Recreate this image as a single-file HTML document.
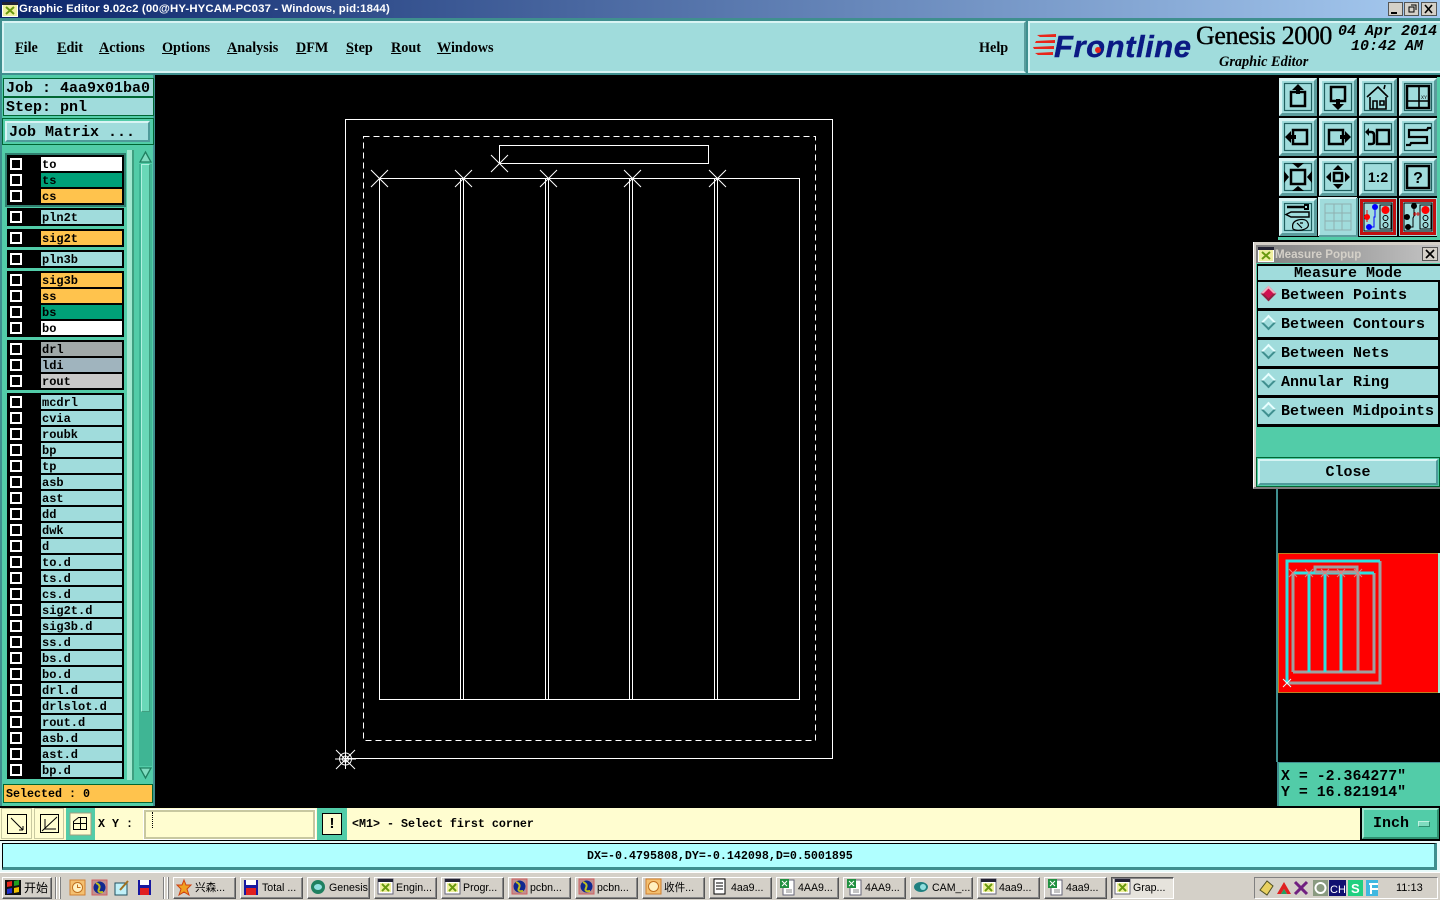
<!DOCTYPE html>
<html><head><meta charset="utf-8"><title>Graphic Editor</title>
<style>
html,body{margin:0;padding:0;width:1440px;height:900px;overflow:hidden;background:#000}
div,span,svg{position:absolute;box-sizing:border-box}
u{position:static;text-decoration:underline}
b,i{position:static}
.m{font:bold 11.67px/14px "Liberation Mono",monospace;color:#000;white-space:pre}
.big{font:bold 15px/16px "Liberation Mono",monospace;color:#000;white-space:pre}
.menu{font:bold 14.2px/16px "Liberation Serif",serif;top:40px;color:#000;white-space:pre}
.g{background:#000;left:7px;width:117px}
.c{left:10px;width:12px;height:12px;border:2px solid #fff;background:#000}
.l{left:41px;width:81px;height:14px;background:#a0dcdc;font:bold 12px/16px "Liberation Mono",monospace;color:#000;padding-left:1px;white-space:pre;overflow:hidden}
.o{background:#ffc34d}.w{background:#fff}.t{background:#00a078}
.b{left:1258px;width:180px;height:26px;background:#a0dcdc;font:bold 15px/28px "Liberation Mono",monospace;padding-left:23px;color:#000;white-space:pre}
.d{left:1263px;width:11px;height:11px;transform:rotate(45deg);background:#a0dcdc;border:2px solid;border-color:#e8ffff #3f8f8f #3f8f8f #e8ffff}
.tb{top:877px;height:22px;width:63px;background:#d4d0c8;border:1px solid;border-color:#fff #555 #555 #fff;box-shadow:inset -1px -1px 0 #888;font:10.6px/21px "Liberation Sans","Noto Sans CJK SC",sans-serif;color:#000;padding-left:20px;white-space:pre;overflow:hidden}
</style></head><body>

<!-- title bar -->
<div style="left:0;top:0;width:1440px;height:18px;background:linear-gradient(90deg,#0a246a,#a6caf0)"></div>
<svg style="left:2px;top:2px" width="16" height="15"><rect width="16" height="15" fill="#fff"/><rect x="0" y="0" width="16" height="3" fill="#223"/><rect x="1" y="3" width="14" height="11" fill="#f0f0a0"/><path d="M4 5l8 7M12 5l-8 7" stroke="#6a9a10" stroke-width="2"/></svg>
<div style="left:19px;top:2px;font:bold 11.4px/14px 'Liberation Sans',sans-serif;color:#fff;white-space:pre;letter-spacing:.12px">Graphic Editor 9.02c2 (00@HY-HYCAM-PC037 - Windows, pid:1844)</div>
<svg style="left:1388px;top:2px" width="50" height="14">
<g fill="#d4d0c8" stroke="#555"><rect x=".5" y=".5" width="14" height="13"/><rect x="16.5" y=".5" width="14" height="13"/><rect x="33.5" y=".5" width="15" height="13"/></g>
<path d="M3 10h6v2H3z" fill="#000"/><path d="M21 5h5v5h-5zM23 3h5v5" fill="none" stroke="#000"/><path d="M37 3l7 8M44 3l-7 8" stroke="#000" stroke-width="1.6"/></svg>

<!-- top menu -->
<div style="left:0;top:18px;width:1440px;height:57px;background:#3f8f8f"></div>
<div style="left:2px;top:21px;width:1024px;height:52px;background:#a0dcdc;border:2px solid;border-color:#d8f4f4 #5a9c9c #d8f4f4 #d8f4f4"></div>
<div class="menu" style="left:15px"><u>F</u>ile</div>
<div class="menu" style="left:57px"><u>E</u>dit</div>
<div class="menu" style="left:99px"><u>A</u>ctions</div>
<div class="menu" style="left:162px"><u>O</u>ptions</div>
<div class="menu" style="left:227px"><u>A</u>nalysis</div>
<div class="menu" style="left:296px"><u>D</u>FM</div>
<div class="menu" style="left:346px"><u>S</u>tep</div>
<div class="menu" style="left:391px"><u>R</u>out</div>
<div class="menu" style="left:437px"><u>W</u>indows</div>
<div class="menu" style="left:979px">Help</div>

<div style="left:1028px;top:21px;width:412px;height:52px;background:#a0dcdc;border-left:2px solid #d8f4f4;border-top:2px solid #d8f4f4;border-bottom:2px solid #d8f4f4"></div>
<svg style="left:1033px;top:33px" width="24" height="26"><g fill="#e8261a"><path d="M4 2L23 1v3L7 4zM3 8l19-1v3L2 10zM0 14l21-1v3H1zM2 20l18-1v3L5 22z"/></g></svg>
<div style="left:1054px;top:29px;font:italic bold 31px/36px 'Liberation Sans',sans-serif;color:#0b1a84;white-space:pre;letter-spacing:.55px;-webkit-text-stroke:.4px #0b1a84">Frontline</div>
<div style="left:1095px;top:47px;width:6px;height:6px;background:#e8261a;border-radius:50%"></div>
<div style="left:1196px;top:21px;font:26px/30px 'Liberation Serif',serif;color:#000;white-space:pre;letter-spacing:-.4px;-webkit-text-stroke:.35px #000">Genesis 2000</div>
<div style="left:1219px;top:54px;font:italic bold 14.3px/16px 'Liberation Serif',serif;color:#000;white-space:pre">Graphic Editor</div>
<div class="big" style="left:1338px;top:24px;font-style:italic">04 Apr 2014</div>
<div class="big" style="left:1351px;top:39px;font-style:italic">10:42 AM</div>

<!-- left panel -->
<div style="left:0;top:75px;width:155px;height:733px;background:#52cca8;border:2px solid #3f8f8f;border-top:0;border-bottom:0"></div>
<div class="big" style="left:3px;top:78px;width:151px;height:19px;background:#a0dcdc;border:1px solid #063;padding:2px 0 0 2px;line-height:16px">Job : 4aa9x01ba0</div>
<div class="big" style="left:3px;top:97px;width:151px;height:19px;background:#a0dcdc;border:1px solid #063;padding:2px 0 0 2px;line-height:16px">Step: pnl</div>
<div style="left:2px;top:118px;width:152px;height:27px;background:#52cca8;border:1px solid #063"></div>
<div class="big" style="left:5px;top:121px;width:145px;height:21px;background:#a0dcdc;border:2px solid;border-color:#d8f4f4 #4f9a9a #4f9a9a #d8f4f4;padding:2px 0 0 2px">Job Matrix ...</div>

<!-- scrollbar -->
<div style="left:127px;top:150px;width:7px;height:630px;background:#a0e8d0;border-right:2px solid #3f9f80"></div>
<div style="left:139px;top:150px;width:13px;height:630px;background:#3fb594"></div>
<div style="left:141px;top:164px;width:9px;height:548px;background:#6ad8b8;border:1px solid;border-color:#b0f0e0 #3f9f80 #3f9f80 #b0f0e0"></div>
<svg style="left:139px;top:150px" width="13" height="14"><rect width="13" height="14" fill="#52cca8"/><path d="M6.500 2L12 12H1z" fill="#7fdcc0" stroke="#1f7f60" stroke-width="1.300"/></svg>
<svg style="left:139px;top:766px" width="13" height="14"><rect width="13" height="14" fill="#52cca8"/><path d="M6.500 12L12 2H1z" fill="#7fdcc0" stroke="#1f7f60" stroke-width="1.300"/></svg>

<!-- layer groups -->
<div style="left:5px;top:153px;width:121px;height:54px;background:#2f7f6f"></div>
<div class="g" style="top:155px;height:50px"></div>
<div class="g" style="top:208px;height:18px"></div>
<div class="g" style="top:229px;height:18px"></div>
<div class="g" style="top:250px;height:18px"></div>
<div class="g" style="top:271px;height:66px"></div>
<div class="g" style="top:340px;height:50px"></div>
<div class="g" style="top:393px;height:386px"></div>

<div class="c" style="top:158px"></div><div class="l w" style="top:157px">to</div>
<div class="c" style="top:174px"></div><div class="l t" style="top:173px">ts</div>
<div class="c" style="top:190px"></div><div class="l o" style="top:189px">cs</div>
<div class="c" style="top:211px"></div><div class="l" style="top:210px">pln2t</div>
<div class="c" style="top:232px"></div><div class="l o" style="top:231px">sig2t</div>
<div class="c" style="top:253px"></div><div class="l" style="top:252px">pln3b</div>
<div class="c" style="top:274px"></div><div class="l o" style="top:273px">sig3b</div>
<div class="c" style="top:290px"></div><div class="l o" style="top:289px">ss</div>
<div class="c" style="top:306px"></div><div class="l t" style="top:305px">bs</div>
<div class="c" style="top:322px"></div><div class="l w" style="top:321px">bo</div>
<div class="c" style="top:343px"></div><div class="l" style="top:342px;background:#a0a8a8">drl</div>
<div class="c" style="top:359px"></div><div class="l" style="top:358px;background:#a0b4be">ldi</div>
<div class="c" style="top:375px"></div><div class="l" style="top:374px;background:#c8c8c8">rout</div>
<div class="c" style="top:396px"></div><div class="l" style="top:395px">mcdrl</div>
<div class="c" style="top:412px"></div><div class="l" style="top:411px">cvia</div>
<div class="c" style="top:428px"></div><div class="l" style="top:427px">roubk</div>
<div class="c" style="top:444px"></div><div class="l" style="top:443px">bp</div>
<div class="c" style="top:460px"></div><div class="l" style="top:459px">tp</div>
<div class="c" style="top:476px"></div><div class="l" style="top:475px">asb</div>
<div class="c" style="top:492px"></div><div class="l" style="top:491px">ast</div>
<div class="c" style="top:508px"></div><div class="l" style="top:507px">dd</div>
<div class="c" style="top:524px"></div><div class="l" style="top:523px">dwk</div>
<div class="c" style="top:540px"></div><div class="l" style="top:539px">d</div>
<div class="c" style="top:556px"></div><div class="l" style="top:555px">to.d</div>
<div class="c" style="top:572px"></div><div class="l" style="top:571px">ts.d</div>
<div class="c" style="top:588px"></div><div class="l" style="top:587px">cs.d</div>
<div class="c" style="top:604px"></div><div class="l" style="top:603px">sig2t.d</div>
<div class="c" style="top:620px"></div><div class="l" style="top:619px">sig3b.d</div>
<div class="c" style="top:636px"></div><div class="l" style="top:635px">ss.d</div>
<div class="c" style="top:652px"></div><div class="l" style="top:651px">bs.d</div>
<div class="c" style="top:668px"></div><div class="l" style="top:667px">bo.d</div>
<div class="c" style="top:684px"></div><div class="l" style="top:683px">drl.d</div>
<div class="c" style="top:700px"></div><div class="l" style="top:699px">drlslot.d</div>
<div class="c" style="top:716px"></div><div class="l" style="top:715px">rout.d</div>
<div class="c" style="top:732px"></div><div class="l" style="top:731px">asb.d</div>
<div class="c" style="top:748px"></div><div class="l" style="top:747px">ast.d</div>
<div class="c" style="top:764px"></div><div class="l" style="top:763px">bp.d</div>

<div class="m" style="left:3px;top:784px;width:150px;height:19px;background:#ffc34d;border:1px solid #063;padding:2px 0 0 2px">Selected : 0</div>

<!-- canvas -->
<svg style="left:155px;top:75px" width="1122" height="733" viewBox="155 75 1122 733">
<g fill="none" stroke="#fff" stroke-width="1" shape-rendering="crispEdges">
<rect x="345.5" y="119.5" width="487" height="639"/>
<rect x="363.5" y="136.5" width="452" height="604" stroke-dasharray="6 4"/>
<rect x="499.5" y="145.5" width="209" height="18"/>
<path d="M379.5 178.5H799.5V699.5H379.500Z"/>
<path d="M460.5 178.5V699.5M463.5 178.5V699.5M545.5 178.5V699.5M548.5 178.5V699.5M629.5 178.5V699.5M632.5 178.5V699.5M714.5 178.5V699.5M717.5 178.5V699.5"/>
</g>
<g stroke="#fff" stroke-width="1" fill="none">
<path d="M371 170l17 17M388 170l-17 17"/>
<path d="M455 170l17 17M472 170l-17 17"/>
<path d="M540 170l17 17M557 170l-17 17"/>
<path d="M624 170l17 17M641 170l-17 17"/>
<path d="M709 170l17 17M726 170l-17 17"/>
<path d="M491 155l17 17M508 155l-17 17"/>
<circle cx="345.5" cy="759" r="6"/><circle cx="345.500" cy="759" r="3"/>
<path d="M336 750l19 19M355 750l-19 19M345.500 749v20M335 759h21"/>
</g>
</svg>

<!-- right side panel -->
<div style="left:1277px;top:75px;width:163px;height:165px;background:#000"></div>
<div style="left:1276px;top:489px;width:2px;height:273px;background:#3f8f8f"></div>
<svg style="left:1278px;top:77px" width="162" height="163">
<defs>
<g id="bv"><rect width="38" height="38" fill="#a0dcdc"/><path d="M0 38V0H38L35 3H3V35Z" fill="#d8f4f4"/><path d="M38 0V38H0L3 35H35V3Z" fill="#5a9c9c"/><rect x="5.500" y="5.500" width="27" height="27" fill="none" stroke="#1f5f5f" stroke-width="1.200"/></g>
</defs>
<rect x="159" width="3" height="161" fill="#52cca8"/>
<rect y="160" width="162" height="3" fill="#52cca8"/>
<g transform="translate(1,1)"><use href="#bv"/><path d="M12 14h14v14H12z" fill="none" stroke="#000" stroke-width="2.500"/><path d="M19 6l6 6h-4v4h-4v-4h-4z" fill="#000"/></g>
<g transform="translate(41,1)"><use href="#bv"/><path d="M12 9h14v14H12z" fill="none" stroke="#000" stroke-width="2.500"/><path d="M19 32l6-6h-4v-5h-4v5h-4z" fill="#000"/></g>
<g transform="translate(81,1)"><use href="#bv"/><path d="M8 19L19 9l10 10M11 19v12h16V19M14 23h4v8h-4zM21 23h4v4h-4zM25 11l1-4" fill="none" stroke="#000" stroke-width="1.600"/></g>
<g transform="translate(121,1)"><use href="#bv"/><path d="M8 8h22v22H8z" fill="none" stroke="#000" stroke-width="2.500"/><path d="M9 23h20M20 9v20" fill="none" stroke="#000" stroke-width="1.600"/><text x="22" y="21" font-family="Liberation Mono" font-size="5" fill="#000">XY</text></g>
<g transform="translate(1,41)"><use href="#bv"/><path d="M14 12h14v14H14z" fill="none" stroke="#000" stroke-width="2.500"/><path d="M6 19l6-6v4h5v4h-5v4z" fill="#000"/></g>
<g transform="translate(41,41)"><use href="#bv"/><path d="M10 12h14v14H10z" fill="none" stroke="#000" stroke-width="2.500"/><path d="M32 19l-6-6v4h-5v4h5v4z" fill="#000"/></g>
<g transform="translate(81,41)"><use href="#bv"/><path d="M18 12h12v14H18z" fill="none" stroke="#000" stroke-width="2.500"/><path d="M9 14h3q3 0 3 3v7q0 2-3 2H9" fill="none" stroke="#000" stroke-width="2.500"/><path d="M6 14l4-4v8z" fill="#000"/></g>
<g transform="translate(121,41)"><use href="#bv"/><path d="M7 27h4l1-2h16v-6H10v-7h18l1-2h3" fill="none" stroke="#000" stroke-width="2.200"/></g>
<g transform="translate(1,81)"><use href="#bv"/><path d="M12 12h14v14H12z" fill="none" stroke="#000" stroke-width="2.500"/><path d="M19 10l-6-5h12zM19 28l-6 5h12zM10 19l-5-6v12zM28 19l5-6v12z" fill="#000"/></g>
<g transform="translate(41,81)"><use href="#bv"/><path d="M15 15h8v8h-8z" fill="none" stroke="#000" stroke-width="2.500"/><path d="M19 7l-5 5h10zM19 31l-5-5h10zM7 19l5-5v10zM31 19l-5-5v10z" fill="#000"/></g>
<g transform="translate(81,81)"><use href="#bv"/><text x="19" y="24" text-anchor="middle" font-family="Liberation Sans" font-weight="bold" font-size="14" fill="#000">1:2</text></g>
<g transform="translate(121,81)"><use href="#bv"/><rect x="8" y="8" width="22" height="22" fill="none" stroke="#000" stroke-width="2.500"/><text x="19" y="25" text-anchor="middle" font-family="Liberation Sans" font-weight="bold" font-size="16" fill="#000">?</text></g>
<g transform="translate(1,121)"><use href="#bv"/><path d="M8 9h18" stroke="#000" stroke-width="2.500"/><path d="M30 6h-5v2h3v2h-3v2h5z" fill="#000"/><path d="M7 16.500l5-2.500h18v5H12z" fill="none" stroke="#000" stroke-width="1.500"/><path d="M14 31q-2-7 5-9 8-2 10 3t-6 7q-6 1-9-1zM18 25l5 5M21 25h3" fill="none" stroke="#000" stroke-width="1.200"/></g>
<g transform="translate(41,121)"><rect width="38" height="38" fill="#a0dcdc"/><path d="M6 6h26v26H6zM15 6v26M23 6v26M6 15h26M6 23h26" fill="none" stroke="#8fb0b0"/><path d="M0 38V0H38" fill="none" stroke="#d8f4f4" stroke-width="2"/><path d="M0 38H38V0" fill="none" stroke="#5a9c9c" stroke-width="2"/></g>
<g transform="translate(81,121)"><rect width="38" height="38" fill="#a0dcdc"/><rect x="2.500" y="2.500" width="33" height="33" fill="none" stroke="#c01010" stroke-width="3"/><rect x="5" y="5" width="28" height="28" fill="none" stroke="#000" stroke-width="1"/><rect x="21" y="7" width="11" height="24" fill="none" stroke="#000"/><circle cx="26.500" cy="12" r="4" fill="#f00"/><circle cx="26.500" cy="20" r="2.500" fill="none" stroke="#000"/><circle cx="26.500" cy="27" r="2.500" fill="none" stroke="#000"/><path d="M16 10v9l-1 0v10H10" fill="none" stroke="#00f"/><path d="M8 12v12" stroke="#d01010"/><circle cx="16" cy="9" r="3" fill="#00f"/><circle cx="8" cy="19" r="3" fill="#f00"/><circle cx="10" cy="29" r="3" fill="#00f"/></g>
<g transform="translate(121,121)"><rect width="38" height="38" fill="#a0dcdc"/><rect x="2.500" y="2.500" width="33" height="33" fill="none" stroke="#c01010" stroke-width="3"/><rect x="5" y="5" width="28" height="28" fill="none" stroke="#000" stroke-width="1"/><rect x="21" y="7" width="11" height="24" fill="none" stroke="#000"/><circle cx="26.500" cy="12" r="4" fill="#f00"/><circle cx="26.500" cy="20" r="2.500" fill="none" stroke="#000"/><circle cx="26.500" cy="27" r="2.500" fill="none" stroke="#000"/><path d="M15 8v10l-1 2v9H9" fill="none" stroke="#000"/><path d="M14 16h7M16 14v4M19 14v4" stroke="#d01010"/><circle cx="15" cy="8" r="3" fill="#000"/><circle cx="8" cy="19" r="3" fill="#000"/><circle cx="9" cy="29" r="3" fill="#000"/></g>
</svg>

<!-- popup -->
<div style="left:1253px;top:242px;width:187px;height:247px;background:#d4d0c8;border-left:1px solid #fff;border-bottom:2px solid #808080"></div>
<div style="left:1256px;top:245px;width:184px;height:18px;background:linear-gradient(90deg,#808080,#c4c4c4)"></div>
<svg style="left:1258px;top:247px" width="16" height="15"><rect width="16" height="15" fill="#fff"/><rect width="16" height="3" fill="#223"/><rect x="1" y="3" width="14" height="11" fill="#f0f0a0"/><path d="M4 5l8 7M12 5l-8 7" stroke="#6a9a10" stroke-width="2"/></svg>
<div style="left:1275px;top:248px;font:bold 11.6px/14px 'Liberation Sans',sans-serif;color:#d4d0c8;white-space:pre">Measure Popup</div>
<svg style="left:1422px;top:247px" width="16" height="14"><rect x=".5" y=".5" width="15" height="13" fill="#d4d0c8" stroke="#555"/><path d="M4 3l8 8M12 3l-8 8" stroke="#000" stroke-width="1.700"/></svg>
<div style="left:1256px;top:263px;width:184px;height:224px;background:#52cca8"></div>
<div style="left:1257px;top:264px;width:183px;height:163px;background:#000"></div>
<div class="big" style="left:1258px;top:266px;width:182px;height:14px;background:#a0dcdc;padding-left:36px;line-height:15px">Measure Mode</div>
<div class="b" style="top:282px">Between Points</div>
<div class="b" style="top:311px">Between Contours</div>
<div class="b" style="top:340px">Between Nets</div>
<div class="b" style="top:369px">Annular Ring</div>
<div class="b" style="top:398px">Between Midpoints</div>
<div class="d" style="top:288px;background:#d01050;border-color:#f0b0c0 #8f2040 #8f2040 #f0b0c0"></div>
<div class="d" style="top:317px"></div>
<div class="d" style="top:346px"></div>
<div class="d" style="top:375px"></div>
<div class="d" style="top:404px"></div>
<div style="left:1256px;top:457px;width:184px;height:30px;background:#52cca8;border:1px solid #063"></div>
<div class="big" style="left:1258px;top:459px;width:180px;height:26px;background:#a0dcdc;border:2px solid;border-color:#d8f4f4 #4f9a9a #4f9a9a #d8f4f4;text-align:center;line-height:24px">Close</div>

<!-- minimap -->
<div style="left:1278px;top:553px;width:160px;height:140px;background:#f00;border-top:1px solid #c08020;border-bottom:1px solid #c08020;border-left:1px solid #c08020"></div>
<svg style="left:1278px;top:553px" width="160" height="140" viewBox="1278 553 160 140">
<g fill="none" stroke-width="3" shape-rendering="crispEdges">
<path d="M1380 561V683H1287" stroke="#a0a0a0"/><path d="M1287 683V561H1380" stroke="#30e0e0"/>
<path d="M1315 572V567H1357V572" stroke="#a0a0a0"/>
<path d="M1374 573V672H1293" stroke="#a0a0a0"/><path d="M1293 672V573" stroke="#a0a0a0"/><path d="M1293 573H1374" stroke="#30e0e0"/>
<path d="M1358 573V672" stroke="#a0a0a0"/>
<path d="M1309 573V672M1325 573V672M1341 573V672" stroke="#30e0e0"/>
<path d="M1315 572H1357" stroke="#a0a0a0"/>
</g>
<path d="M1283 679l8 8M1291 679l-8 8" stroke="#e0ffff" fill="none"/>
<path d="M1289 569l8 8M1297 569l-8 8M1305 569l8 8M1313 569l-8 8M1321 569l8 8M1329 569l-8 8M1337 569l8 8M1345 569l-8 8M1354 569l8 8M1362 569l-8 8" stroke="#e08080" fill="none"/>
</svg>
<div style="left:1438px;top:553px;width:2px;height:140px;background:#a0e8d0"></div>

<!-- coordinates -->
<div style="left:1277px;top:762px;width:163px;height:44px;background:#52cca8;border-left:2px solid #3f8f8f;border-top:1px solid #3f8f8f"></div>
<div class="big" style="left:1281px;top:769px;font-size:14.9px">X = -2.364277"</div>
<div class="big" style="left:1281px;top:785px;font-size:14.9px">Y = 16.821914"</div>

<!-- command row -->
<div style="left:0;top:806px;width:1440px;height:35px;background:#000"></div>
<div style="left:0;top:808px;width:1360px;height:32px;background:#fffdd0"></div>
<svg style="left:0;top:808px" width="96" height="32">
<g fill="none" stroke="#000"><rect x="1.500" y=".5" width="30" height="30" stroke="#c8c8a0"/><rect x="7.500" y="6.500" width="19" height="19"/><path d="M11 10l12 12M23 22v-4M23 22h-4"/>
<rect x="34.500" y=".5" width="29" height="30" stroke="#c8c8a0"/><rect x="40.500" y="6.500" width="18" height="18"/><path d="M42 23L57 9M45 11v10h11"/></g>
<rect x="66" y="0" width="29" height="32" fill="#52cca8"/><rect x="70" y="5" width="21" height="22" fill="#fffdd0" stroke="#a0a080"/><path d="M73.500 21.500v-8l5-4h8v12zM73.500 15.500h13M80.500 9.500v12" fill="none" stroke="#000"/>
</svg>
<div class="m" style="left:98px;top:817px">X Y :</div>
<div style="left:144px;top:810px;width:171px;height:29px;background:#fffdd0;border:2px solid #c8c8a0;outline:1px solid #fff"></div>
<div style="left:152px;top:812px;height:16px;border-left:1px dotted #000"></div>
<div style="left:317px;top:808px;width:30px;height:32px;background:#52cca8"></div>
<div style="left:322px;top:813px;width:20px;height:22px;background:#fffdd0;border:1px solid #000;font:bold 15px/20px 'Liberation Sans',sans-serif;text-align:center">!</div>
<div class="m" style="left:352px;top:817px">&lt;M1&gt; - Select first corner</div>
<div style="left:1360px;top:806px;width:80px;height:35px;background:#000"></div>
<div style="left:1362px;top:808px;width:77px;height:31px;background:#52cca8;border:2px solid;border-color:#a0e8d0 #2f8f70 #2f8f70 #a0e8d0"></div>
<div class="big" style="left:1373px;top:816px">Inch</div>
<div style="left:1418px;top:821px;width:12px;height:6px;background:#7fdcc0;border:1px solid;border-color:#c0f0e0 #2f8f70 #2f8f70 #c0f0e0"></div>

<!-- status -->
<div style="left:0;top:841px;width:1440px;height:31px;background:#e8fafa"></div>
<div style="left:2px;top:843px;width:1435px;height:27px;background:#b0ffff;border:1px solid #000;border-right:3px solid #3f8f8f;border-bottom:3px solid #3f8f8f"></div>
<div class="m" style="left:587px;top:849px">DX=-0.4795808,DY=-0.142098,D=0.5001895</div>

<!-- taskbar -->
<div style="left:0;top:872px;width:1440px;height:28px;background:#d4d0c8;border-top:1px solid #fff"></div>
<div class="tb" style="left:2px;width:50px;padding-left:21px;font-size:12px">开始</div>
<svg style="left:5px;top:880px" width="16" height="15"><rect width="16" height="15" fill="#111"/><path d="M2 2l5-1v5l-5 1z" fill="#e8261a"/><path d="M9 1l5-1v5l-5 1z" fill="#20a020"/><path d="M2 9l5-1v5l-5 1z" fill="#2030d0"/><path d="M9 8l5-1v5l-5 1z" fill="#f0c000"/></svg>
<div style="left:55px;top:877px;width:2px;height:22px;border-left:1px solid #808080;border-right:1px solid #fff"></div>
<div style="left:59px;top:877px;width:2px;height:22px;border-left:1px solid #fff;border-right:1px solid #808080"></div>
<svg style="left:68px;top:878px" width="100" height="20">
<rect x="2" y="2" width="15" height="15" fill="#f4c070" stroke="#d08030"/><circle cx="9.500" cy="9.500" r="5" fill="#fff0c0" stroke="#c07020"/><path d="M9.500 6.500v3h3" stroke="#c07020" fill="none"/>
<rect x="24" y="2" width="15" height="15" fill="#c09090" stroke="#d06060"/><circle cx="31.500" cy="9.500" r="6" fill="#102890"/><path d="M28 5q5 2 3 6t4 3" stroke="#c0c020" stroke-width="2" fill="none"/>
<rect x="47" y="5" width="12" height="12" fill="#c0f0f8" stroke="#205060"/><path d="M52 12l8-9" stroke="#a07020" stroke-width="2"/>
<path d="M70 2h13v15H70z" fill="#1818a0"/><rect x="72" y="2" width="9" height="5" fill="#fff"/><rect x="72" y="10" width="9" height="7" fill="#e02020"/>
</svg>
<div style="left:163px;top:877px;width:2px;height:22px;border-left:1px solid #808080;border-right:1px solid #fff"></div>
<div style="left:167px;top:877px;width:2px;height:22px;border-left:1px solid #fff;border-right:1px solid #808080"></div>

<div class="tb" style="left:173px;padding-left:21px">兴森...</div>
<div class="tb" style="left:240px;padding-left:21px">Total ...</div>
<div class="tb" style="left:307px;padding-left:21px">Genesis</div>
<div class="tb" style="left:374px;padding-left:21px">Engin...</div>
<div class="tb" style="left:441px;padding-left:21px">Progr...</div>
<div class="tb" style="left:508px;padding-left:21px">pcbn...</div>
<div class="tb" style="left:575px;padding-left:21px">pcbn...</div>
<div class="tb" style="left:642px;padding-left:21px">收件...</div>
<div class="tb" style="left:709px;padding-left:21px">4aa9...</div>
<div class="tb" style="left:776px;padding-left:21px">4AA9...</div>
<div class="tb" style="left:843px;padding-left:21px">4AA9...</div>
<div class="tb" style="left:910px;padding-left:21px">CAM_...</div>
<div class="tb" style="left:977px;padding-left:21px">4aa9...</div>
<div class="tb" style="left:1044px;padding-left:21px">4aa9...</div>
<div class="tb" style="left:1111px;padding-left:21px;border-color:#555 #fff #fff #555;box-shadow:inset 1px 1px 0 #888;background:#e6e3dc">Grap...</div>

<svg style="left:0;top:878px" width="1200" height="20">
<defs>
<g id="xw"><rect x="0" y="1" width="15" height="15" fill="#fff" stroke="#667"/><rect x="0" y="1" width="15" height="3" fill="#223"/><rect x="2" y="5" width="11" height="9" fill="#f0f0a0"/><path d="M4 6l7 7M11 6l-7 7" stroke="#6a9a10" stroke-width="2"/></g>
<g id="glb"><rect x="0" y="1" width="15" height="15" fill="#c09090" stroke="#d06060"/><circle cx="7.500" cy="8.500" r="6" fill="#102890"/><path d="M4 4q5 2 3 6t4 3" stroke="#c0c020" stroke-width="2" fill="none"/></g>
<g id="xl"><rect x="3" y="2" width="11" height="15" fill="#fff" stroke="#667"/><rect x="0" y="1" width="9" height="9" fill="#209040"/><path d="M2 3l5 5M7 3l-5 5" stroke="#fff"/><path d="M6 12h6M6 14h6" stroke="#888"/></g>
</defs>
<path d="M184 2l2 5h5l-4 4 2 6-5-3-5 3 2-6-4-4h5z" fill="#f0a020" stroke="#d04010"/>
<path d="M244 2h14v15h-14z" fill="#1818a0"/><rect x="246" y="2" width="10" height="5" fill="#fff"/><rect x="246" y="10" width="10" height="7" fill="#e02020"/>
<ellipse cx="318" cy="9" rx="7" ry="7" fill="#208060"/><ellipse cx="318" cy="9" rx="4" ry="3" fill="#90e0e0"/>
<use href="#xw" x="378"/><use href="#xw" x="445"/><use href="#glb" x="512"/><use href="#glb" x="579"/>
<rect x="646" y="1" width="15" height="15" fill="#f4c070" stroke="#d08030"/><circle cx="653.500" cy="8.500" r="5" fill="#fff0c0" stroke="#c07020"/>
<rect x="714" y="1" width="11" height="15" fill="#fff" stroke="#000"/><path d="M716 5h7M716 8h7M716 11h7" stroke="#000"/>
<use href="#xl" x="780"/><use href="#xl" x="847"/>
<ellipse cx="921" cy="9" rx="7" ry="5" fill="#208080"/><circle cx="923" cy="9" r="3" fill="#90e0e0"/>
<use href="#xw" x="981"/><use href="#xl" x="1048"/><use href="#xw" x="1115"/>
</svg>

<!-- tray -->
<div style="left:1254px;top:877px;width:184px;height:22px;border:1px solid;border-color:#808080 #fff #fff #808080"></div>
<svg style="left:1258px;top:879px" width="120" height="18">
<path d="M2 11l7-9 6 5-6 9z" fill="#e8d060" stroke="#505020"/>
<path d="M19 15l7-12 7 12h-4l-3-5-3 5z" fill="#e02020"/><path d="M23 15l3-5 3 5" fill="#20a060"/>
<path d="M37 3l12 12M49 3L37 15" stroke="#702080" stroke-width="3"/>
<rect x="55" y="1" width="15" height="16" fill="#8a9a80"/><circle cx="62.500" cy="9" r="5" fill="none" stroke="#fff" stroke-width="2"/>
<rect x="71" y="1" width="17" height="16" fill="#101070"/><text x="72" y="14" font-family="Liberation Sans" font-size="11" fill="#fff">CH</text>
<rect x="90" y="1" width="15" height="16" fill="#20d080"/><text x="93" y="14" font-family="Liberation Sans" font-weight="bold" font-size="13" fill="#fff">S</text>
<rect x="108" y="1" width="14" height="16" fill="#40b8e0"/><path d="M111 5h9M113 10h7M113 5v10" stroke="#fff" stroke-width="2" fill="none"/>
</svg>
<div style="left:1396px;top:881px;font:11px/14px 'Liberation Sans',sans-serif;color:#000">11:13</div>

</body></html>
